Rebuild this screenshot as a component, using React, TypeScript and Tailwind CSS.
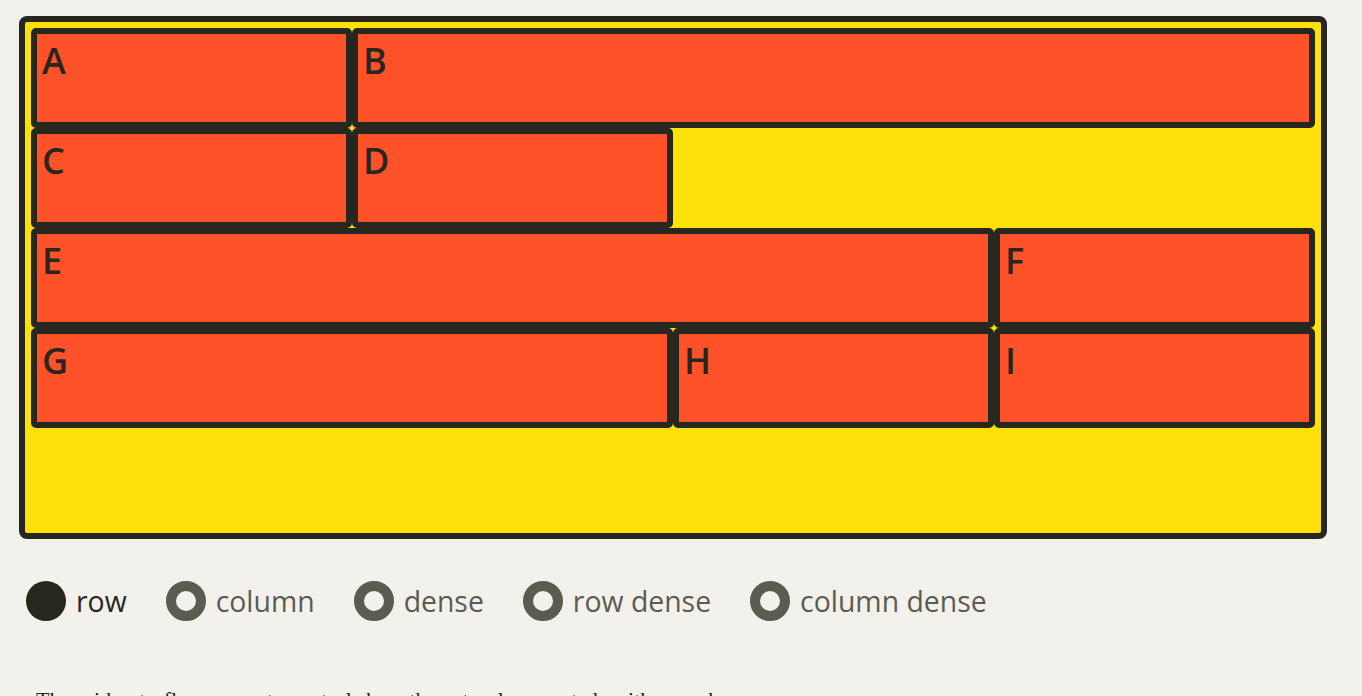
const items = [
  { label: "A", span: "col-span-1" },
  { label: "B", span: "col-span-3" },
  { label: "C", span: "col-span-1" },
  { label: "D", span: "col-span-1" },
  { label: "E", span: "col-span-3" },
  { label: "F", span: "col-span-1" },
  { label: "G", span: "col-span-2" },
  { label: "H", span: "col-span-1" },
  { label: "I", span: "col-span-1" },
];

const options = ["row", "column", "dense", "row dense", "column dense"];

function App() {
  const selected = "row";

  return (
    <div
      className="h-screen bg-[#f2f1ec] pl-[19px] pt-[16px] overflow-hidden"
      style={{ fontFamily: '"Open Sans", "Noto Sans", sans-serif' }}
    >
      <div className="box-border w-[1308px] h-[523px] rounded-[8px] border-[6px] border-[#28271f] bg-[#ffe10a] p-[6px]">
        <div className="grid grid-cols-4 auto-rows-[100px] grid-flow-row">
          {items.map((item) => (
            <div
              key={item.label}
              className={`${item.span} box-border rounded-[5px] border-[6px] border-[#28271f] bg-[#ff5229] pl-[5px] text-[36px] font-semibold leading-[1.5] text-[#28271f]`}
            >
              {item.label}
            </div>
          ))}
        </div>
      </div>

      <div className="mt-[42px] flex items-center gap-[39px] pl-[7px]">
        {options.map((opt) => (
          <label key={opt} className="flex items-center gap-[10px]">
            {opt === selected ? (
              <span className="block h-[40px] w-[40px] rounded-full bg-[#28271f]" />
            ) : (
              <span className="box-border block h-[40px] w-[40px] rounded-full border-[10px] border-[#5c5b50] bg-[#f2f1ec]" />
            )}
            <span
              className={`text-[28.4px] leading-[40px] ${
                opt === selected ? "text-[#28271f]" : "text-[#5c5b50]"
              }`}
            >
              {opt}
            </span>
          </label>
        ))}
      </div>

      <p
        className="mt-[64px] pl-[17px] text-[22px] leading-[30px] text-[#28271f]"
        style={{ fontFamily: '"Liberation Serif", serif' }}
      >
        The grid-auto-flow property controls how the auto-placement algorithm works.
      </p>
    </div>
  );
}

export default App;
